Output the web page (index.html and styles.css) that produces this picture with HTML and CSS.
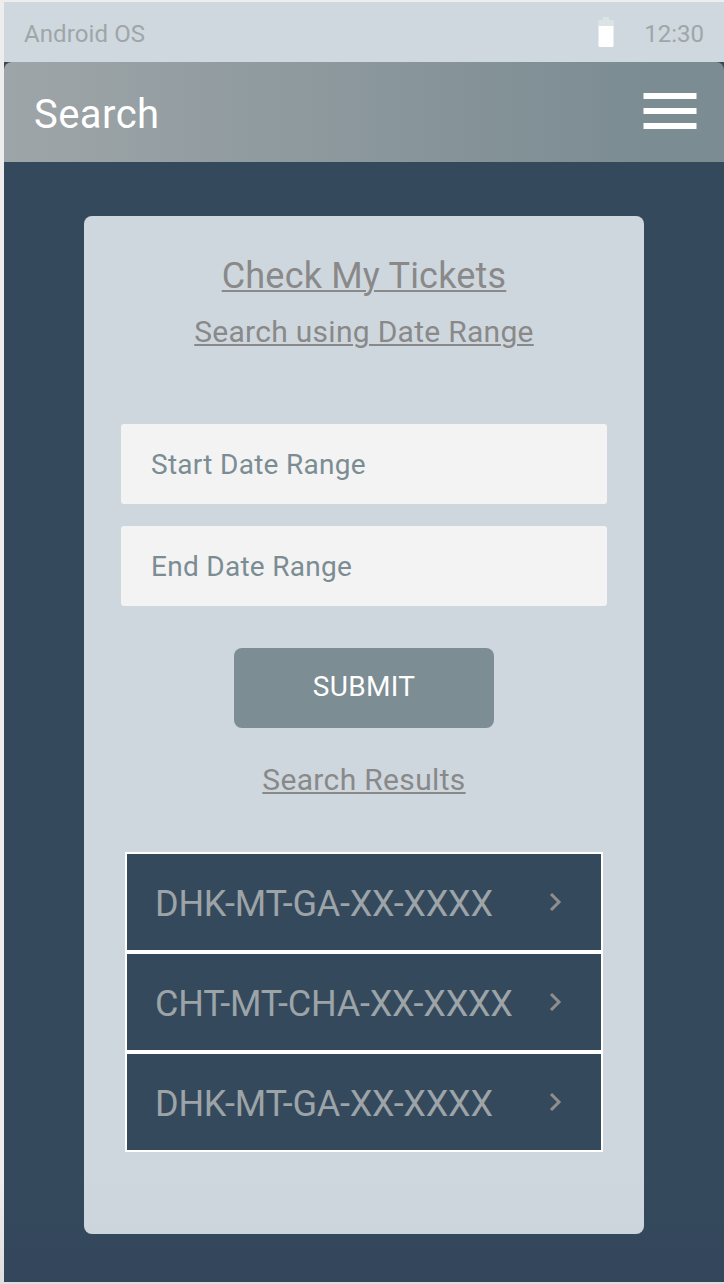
FILE: index.html
```html
<!DOCTYPE html>
<html lang="en">
<head>
<meta charset="utf-8">
<title>Search</title>
<link rel="stylesheet" href="styles.css">
</head>
<body>
<div class="screen">
  <div class="status">
    <span class="os"><span>Android OS</span></span>
    <svg class="battery" width="16" height="30" viewBox="0 0 16 30"><path d="M5 0h6v3h3.500q1.500 0 1.500 1.500V9H0V4.500Q0 3 1.500 3H5z" fill="#dbe3e5"/><path d="M.5 9h15v19.500q0 1.500-1.500 1.500H2q-1.500 0-1.500-1.500z" fill="#fff"/></svg>
    <span class="clock"><span>12:30</span></span>
  </div>
  <header class="bar">
    <h1><span>Search</span></h1>
    <svg class="menu" width="54" height="36" viewBox="0 0 54 36" fill="#fff"><path d="M.5 0h53v6H.5zM.5 15h53v6H.5zM.5 30h53v6H.5z"/></svg>
  </header>
  <main class="card">
    <h2 class="title"><span>Check My Tickets</span></h2>
    <h3 class="sub"><span>Search using Date Range</span></h3>
    <div class="field start"><span>Start Date Range</span></div>
    <div class="field end"><span>End Date Range</span></div>
    <button class="submit"><span>SUBMIT</span></button>
    <h3 class="results-title"><span>Search Results</span></h3>
    <div class="results">
      <div class="row"><span>DHK-MT-GA-XX-XXXX</span><svg class="chev" width="14" height="20" viewBox="0 0 14 20"><path d="M2 2l8 8-8 8"/></svg></div>
      <div class="row"><span>CHT-MT-CHA-XX-XXXX</span><svg class="chev" width="14" height="20" viewBox="0 0 14 20"><path d="M2 2l8 8-8 8"/></svg></div>
      <div class="row"><span>DHK-MT-GA-XX-XXXX</span><svg class="chev" width="14" height="20" viewBox="0 0 14 20"><path d="M2 2l8 8-8 8"/></svg></div>
    </div>
  </main>
</div>
</body>
</html>
```
FILE: styles.css
```css
* { box-sizing: border-box; margin: 0; padding: 0; }
body {
  width: 724px;
  height: 1284px;
  padding: 2px 0 2px 4px;
  background: linear-gradient(#ededee 0, #ededee 1180px, #dedede 1284px);
  font-family: Roboto, "Liberation Sans", sans-serif;
  overflow: hidden;
}
h1, h2, h3 { font-weight: 400; }
svg { display: block; }
.screen {
  height: 1280px;
  display: flex;
  flex-direction: column;
  background: linear-gradient(#35495d 0, #35495d 1190px, #33465b 1280px);
}
.status {
  height: 60px;
  padding: 0 20px;
  display: flex;
  align-items: center;
  background: #cfd8de;
  color: #9ea6a8;
  font-size: 24px;
  line-height: 28px;
}
.os { flex: 1; padding-top: 3px; letter-spacing: .1px; }
.battery { margin-right: 30px; }
.clock { padding-top: 3px; }
.bar {
  height: 100px;
  padding: 0 27px 0 30px;
  display: flex;
  align-items: center;
  justify-content: space-between;
  border-radius: 8px 8px 0 0;
  background: linear-gradient(90deg, #9ea5a8, #7b8c92 90%);
  color: #fff;
}
.bar h1 { font-size: 40px; line-height: 48px; padding-top: 5px; letter-spacing: .45px; }
.menu { margin-bottom: 2px; }
.card {
  width: 560px;
  height: 1018px;
  margin: 54px 0 0 80px;
  padding-top: 38px;
  display: flex;
  flex-direction: column;
  align-items: center;
  border-radius: 8px;
  background: linear-gradient(#cfd7de 0, #cfd7de 960px, #ccd5db);
}
.title, .sub, .results-title {
  color: #898989;
  text-decoration: underline 2px;
  text-underline-offset: 2px;
}
.title { font-size: 36px; line-height: 44px; letter-spacing: .19px; }
.sub { margin-top: 16px; font-size: 30px; line-height: 36px; letter-spacing: .28px; }
.field {
  width: 486px;
  height: 80px;
  padding: 0 30px;
  border-radius: 3px;
  background: #f3f3f3;
  color: #7b8d93;
  font-size: 28px;
  line-height: 82px;
  letter-spacing: .28px;
}
.start { margin-top: 74px; }
.end { margin-top: 22px; }
.submit {
  width: 260px;
  height: 80px;
  margin-top: 42px;
  padding-bottom: 2px;
  border: 0;
  border-radius: 8px;
  background: #7c8d93;
  color: #fff;
  font: 28px/76px Roboto, "Liberation Sans", sans-serif;
  letter-spacing: .3px;
}
.results-title { margin-top: 34px; font-size: 30px; line-height: 36px; letter-spacing: .34px; }
.results { width: 478px; margin-top: 54px; }
.row {
  height: 100px;
  padding: 0 38px 0 28px;
  display: flex;
  align-items: center;
  justify-content: space-between;
  border: 2px solid #fff;
  background: #35495d;
  color: #9ca4a7;
  font-size: 36px;
  letter-spacing: -.22px;
}
.row span { padding-top: 3px; }
.chev { fill: none; stroke: #8e8e8e; stroke-width: 3; }
```
